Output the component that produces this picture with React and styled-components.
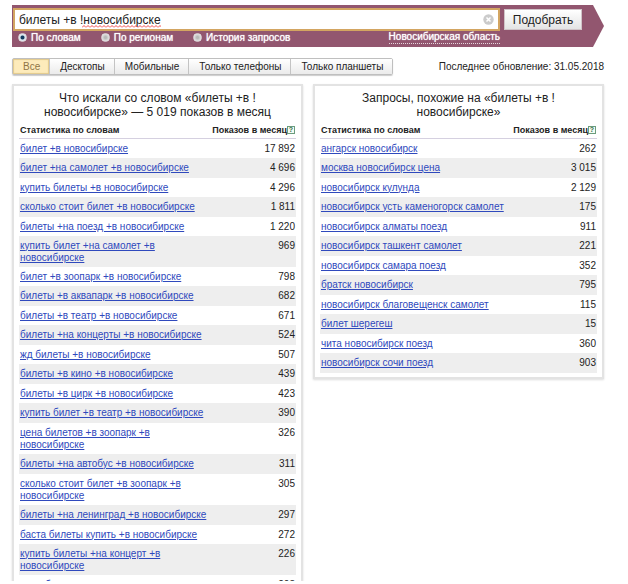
import { useState } from 'react';
import styled, { createGlobalStyle } from 'styled-components';

const GlobalStyle = createGlobalStyle`
  * {
    box-sizing: border-box;
  }
  body {
    margin: 0;
    background: #fff;
    color: #222;
    font-family: "Liberation Sans", Arial, sans-serif;
    font-size: 10px;
  }
  button,
  input {
    font-family: inherit;
  }
`;

const Page = styled.div`
  height: calc(100vh - 3px);
  overflow: hidden;
  padding: 5px 24px 0 12px;
`;

const SearchForm = styled.form`
  align-content: start;
  background: #92566f;
  clip-path: polygon(0 0, calc(100% - 11px) 0, 100% 50%, calc(100% - 11px) 100%, 0 100%);
  display: grid;
  grid-template-columns: 1fr 78px;
  column-gap: 4px;
  height: 42px;
  padding: 3px 22px 0 1px;
`;

const SearchBox = styled.div`
  align-items: center;
  background: #fff;
  border: 2px solid #d3a561;
  display: flex;
  height: 23px;
  position: relative;
`;

const SearchInput = styled.input`
  background: transparent;
  border: 0;
  color: #222;
  flex: 1;
  font-size: 12px;
  height: 17px;
  min-width: 0;
  outline: none;
  padding: 0 4px;
`;

const SpellingMark = styled.svg`
  bottom: 1px;
  left: 67px;
  pointer-events: none;
  position: absolute;
`;

const ClearButton = styled.button`
  background: none;
  border: 0;
  cursor: pointer;
  display: flex;
  margin-right: 4px;
  padding: 0;
`;

const SubmitButton = styled.button`
  background: linear-gradient(#fff, #e4e4e4);
  border: 1px solid #d0c4c8;
  color: #222;
  cursor: pointer;
  font-size: 12px;
  height: 21px;
  margin-top: 1px;
  padding: 0;
`;

const SearchOptions = styled.div`
  align-items: center;
  color: #fff;
  display: flex;
  gap: 15px;
  height: 13px;
  text-shadow: 0 0 1px #fff;
`;

const RadioLabel = styled.label`
  align-items: center;
  display: flex;
  gap: 4px;
`;

const Radio = styled.input`
  appearance: none;
  background: radial-gradient(circle, #b9b9b9 20%, #efefef 90%);
  border: 1px solid #e0d8dc;
  border-radius: 50%;
  height: 9px;
  margin: 0 0 0 5px;
  width: 9px;
  &:checked {
    background: radial-gradient(circle, #123a5e 30%, #dce8f0 50%);
  }
`;

const RegionLink = styled.a`
  border-bottom: 1px dotted #e5d5dc;
  color: #fff;
  line-height: 12px;
  margin-left: auto;
  text-decoration: none;
`;

const Toolbar = styled.div`
  align-items: center;
  display: flex;
  justify-content: space-between;
  margin: 11px 0 9px;
`;

const Tabs = styled.div`
  border: 1px solid #bfbfbf;
  border-radius: 2px;
  box-shadow: 0 1px 1px #ccc;
  display: flex;
`;

const Tab = styled.button`
  background: ${(props) => (props.$active ? '#fdebbb' : 'linear-gradient(#fff, #ebebeb)')};
  border: 0;
  border-left: 1px solid #c4c4c4;
  box-shadow: ${(props) => (props.$active ? 'inset 0 0 1px 1px #e2c98c' : 'none')};
  color: ${(props) => (props.$active ? '#8f7546' : '#222')};
  cursor: pointer;
  font-size: 10px;
  height: 15px;
  line-height: 14px;
  padding: 0 9px 0 10px;
  &:first-child {
    border-left: 0;
  }
`;

const Columns = styled.div`
  align-items: flex-start;
  display: grid;
  gap: 10px;
  grid-template-columns: 1fr 1fr;
`;

const Panel = styled.section`
  border: 2px solid #e3e3e3;
  box-shadow: 0 1px 2px #ddd;
  padding: 5px 5px 4px;
`;

const PanelTitle = styled.h2`
  font-size: 12px;
  font-weight: normal;
  line-height: 14px;
  margin: 0 auto;
  max-width: 240px;
  text-align: center;
`;

const StatsTable = styled.table`
  border-collapse: collapse;
  margin-top: 4px;
  table-layout: fixed;
  width: 100%;
`;

const HeadCell = styled.th`
  border-bottom: 1px solid #d5d0e0;
  font-size: 9px;
  height: 15px;
  line-height: 12px;
  padding: 0 1px;
  text-align: ${(props) => (props.$right ? 'right' : 'left')};
  white-space: nowrap;
  width: ${(props) => (props.$right ? '86px' : 'auto')};
`;

const Help = styled.button`
  background: #f4fbf4;
  border: 1px solid #6b9c7d;
  color: #2f6b45;
  font-size: 7px;
  font-weight: bold;
  height: 8px;
  line-height: 6px;
  padding: 0;
  vertical-align: 1px;
  width: 8px;
`;

const Row = styled.tr`
  height: 19px;
  &:nth-child(even) {
    background: #eee;
    height: 20px;
  }
`;

const Cell = styled.td`
  line-height: 12px;
  padding: 4px 1px 3px;
  text-align: ${(props) => (props.$right ? 'right' : 'left')};
  vertical-align: top;
`;

const QueryLink = styled.a`
  color: #2f49bd;
`;

const tabs = ['Все', 'Десктопы', 'Мобильные', 'Только телефоны', 'Только планшеты'];

const modes = ['По словам', 'По регионам', 'История запросов'];

const searched = [
  ['билет +в новосибирске', '17 892'],
  ['билет +на самолет +в новосибирске', '4 696'],
  ['купить билеты +в новосибирске', '4 296'],
  ['сколько стоит билет +в новосибирске', '1 811'],
  ['билеты +на поезд +в новосибирске', '1 220'],
  ['купить билет +на самолет +в новосибирске', '969'],
  ['билет +в зоопарк +в новосибирске', '798'],
  ['билеты +в аквапарк +в новосибирске', '682'],
  ['билеты +в театр +в новосибирске', '671'],
  ['билеты +на концерты +в новосибирске', '524'],
  ['жд билеты +в новосибирске', '507'],
  ['билеты +в кино +в новосибирске', '439'],
  ['билеты +в цирк +в новосибирске', '423'],
  ['купить билет +в театр +в новосибирске', '390'],
  ['цена билетов +в зоопарк +в новосибирске', '326'],
  ['билеты +на автобус +в новосибирске', '311'],
  ['сколько стоит билет +в зоопарк +в новосибирске', '305'],
  ['билеты +на ленинград +в новосибирске', '297'],
  ['баста билеты купить +в новосибирске', '272'],
  ['купить билеты +на концерт +в новосибирске', '226'],
  ['цена билеты +на концерт +в новосибирске', '208'],
];

const similar = [
  ['ангарск новосибирск', '262'],
  ['москва новосибирск цена', '3 015'],
  ['новосибирск кулунда', '2 129'],
  ['новосибирск усть каменогорск самолет', '175'],
  ['новосибирск алматы поезд', '911'],
  ['новосибирск ташкент самолет', '221'],
  ['новосибирск самара поезд', '352'],
  ['братск новосибирск', '795'],
  ['новосибирск благовещенск самолет', '115'],
  ['билет шерегеш', '15'],
  ['чита новосибирск поезд', '360'],
  ['новосибирск сочи поезд', '903'],
];

const Stats = ({ title, rows }) => (
  <Panel>
    <PanelTitle>{title}</PanelTitle>
    <StatsTable>
      <thead>
        <tr>
          <HeadCell>Статистика по словам</HeadCell>
          <HeadCell $right>
            Показов в месяц
            <Help type="button">?</Help>
          </HeadCell>
        </tr>
      </thead>
      <tbody>
        {rows.map(([query, count]) => (
          <Row key={query}>
            <Cell><QueryLink href="#">{query}</QueryLink></Cell>
            <Cell $right>{count}</Cell>
          </Row>
        ))}
      </tbody>
    </StatsTable>
  </Panel>
);

const App = () => {
  const [query, setQuery] = useState('билеты +в !новосибирске');
  const [mode, setMode] = useState(modes[0]);
  const [activeTab, setActiveTab] = useState(tabs[0]);

  return (
    <>
      <GlobalStyle />
      <Page>
        <SearchForm onSubmit={(e) => e.preventDefault()}>
          <SearchBox>
            <SearchInput
              aria-label="Запрос"
              spellCheck={false}
              value={query}
              onChange={(e) => setQuery(e.target.value)}
            />
            <SpellingMark width="79" height="3" aria-hidden="true">
              <defs>
                <pattern id="wave" width="4" height="3" patternUnits="userSpaceOnUse">
                  <path d="M0 2.5 L2 0.5 L4 2.5" fill="none" stroke="#f0474a" strokeWidth="1" />
                </pattern>
              </defs>
              <rect width="79" height="3" fill="url(#wave)" />
            </SpellingMark>
            <ClearButton type="button" aria-label="Очистить" onClick={() => setQuery('')}>
              <svg width="11" height="11" viewBox="0 0 11 11">
                <circle cx="5.5" cy="5.5" r="5.2" fill="#cbcbcb" />
                <path d="M3.5 3.5 L7.5 7.5 M7.5 3.5 L3.5 7.5" stroke="#fff" strokeWidth="1.5" />
              </svg>
            </ClearButton>
          </SearchBox>
          <SubmitButton type="submit">Подобрать</SubmitButton>
          <SearchOptions>
            {modes.map((name) => (
              <RadioLabel key={name}>
                <Radio type="radio" name="mode" checked={mode === name} onChange={() => setMode(name)} />
                {name}
              </RadioLabel>
            ))}
            <RegionLink href="#">Новосибирская область</RegionLink>
          </SearchOptions>
        </SearchForm>
        <Toolbar>
          <Tabs>
            {tabs.map((name) => (
              <Tab key={name} type="button" $active={activeTab === name} onClick={() => setActiveTab(name)}>
                {name}
              </Tab>
            ))}
          </Tabs>
          <span>Последнее обновление: 31.05.2018</span>
        </Toolbar>
        <Columns>
          <Stats title="Что искали со словом «билеты +в !новосибирске» — 5 019 показов в месяц" rows={searched} />
          <Stats title="Запросы, похожие на «билеты +в !новосибирске»" rows={similar} />
        </Columns>
      </Page>
    </>
  );
};

export default App;
